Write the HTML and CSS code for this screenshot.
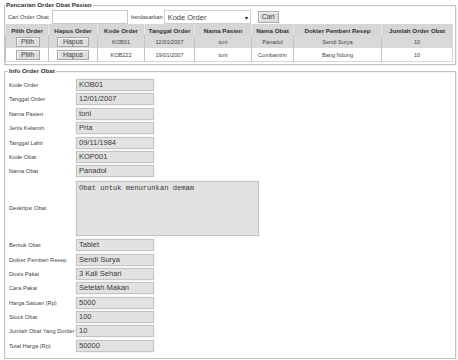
FILE: index.html
```html
<!DOCTYPE html>
<html>

<head>
    <title>Order Obat Pasien</title>
    <link rel="stylesheet" href="styles.css">
</head>

<body>
    <fieldset class="panel search-panel">
        <legend>Pencarian Order Obat Pasien</legend>
        <div class="search-row">
            <label class="lbl" for="cari">Cari Order Obat:</label>
            <input class="search-input" type="text" id="cari">
            <span class="lbl">berdasarkan</span>
            <div class="select">
                <span>Kode Order</span>
                <span class="arrow">&#9662;</span>
            </div>
            <button class="btn btn-cari" type="button">Cari</button>
        </div>
        <table class="orders">
            <colgroup>
                <col style="width: 43px">
                <col style="width: 49px">
                <col style="width: 47px">
                <col style="width: 50px">
                <col style="width: 57px">
                <col style="width: 42px">
                <col style="width: 88px">
                <col style="width: 71px">
            </colgroup>
            <tr>
                <th>Pilih Order</th>
                <th>Hapus Order</th>
                <th>Kode Order</th>
                <th>Tanggal Order</th>
                <th>Nama Pasien</th>
                <th>Nama Obat</th>
                <th>Dokter Pemberi Resep</th>
                <th>Jumlah Order Obat</th>
            </tr>
            <tr class="selected">
                <td><button class="btn btn-pilih" type="button">Pilih</button></td>
                <td><button class="btn btn-hapus" type="button">Hapus</button></td>
                <td>KOB01</td>
                <td>12/01/2007</td>
                <td>toni</td>
                <td>Panadol</td>
                <td>Sendi Surya</td>
                <td>10</td>
            </tr>
            <tr>
                <td><button class="btn btn-pilih" type="button">Pilih</button></td>
                <td><button class="btn btn-hapus" type="button">Hapus</button></td>
                <td>KOB222</td>
                <td>19/01/2007</td>
                <td>toni</td>
                <td>Combantrin</td>
                <td>Bang Ndung</td>
                <td>10</td>
            </tr>
        </table>
    </fieldset>

    <fieldset class="panel info-panel">
        <legend>Info Order Obat</legend>
        <div class="form-grid">
            <span class="lbl">Kode Order</span>
            <div class="field">KOB01</div>
            <span class="lbl">Tanggal Order</span>
            <div class="field">12/01/2007</div>
            <span class="lbl">Nama Pasien</span>
            <div class="field">toni</div>
            <span class="lbl">Jenis Kelamin</span>
            <div class="field">Pria</div>
            <span class="lbl">Tanggal Lahir</span>
            <div class="field">09/11/1984</div>
            <span class="lbl">Kode Obat</span>
            <div class="field">KOP001</div>
            <span class="lbl">Nama Obat</span>
            <div class="field">Panadol</div>
            <span class="lbl">Deskripsi Obat</span>
            <div class="field area">Obat untuk menurunkan demam</div>
            <span class="lbl">Bentuk Obat</span>
            <div class="field">Tablet</div>
            <span class="lbl">Dokter Pemberi Resep</span>
            <div class="field">Sendi Surya</div>
            <span class="lbl">Dosis Pakai</span>
            <div class="field">3 Kali Sehari</div>
            <span class="lbl">Cara Pakai</span>
            <div class="field">Setelah Makan</div>
            <span class="lbl">Harga Satuan (Rp)</span>
            <div class="field">5000</div>
            <span class="lbl">Stock Obat</span>
            <div class="field">100</div>
            <span class="lbl">Jumlah Obat Yang Dorder</span>
            <div class="field">10</div>
            <span class="lbl">Total Harga (Rp)</span>
            <div class="field">50000</div>
        </div>
    </fieldset>
</body>

</html>
```

FILE: styles.css
```css
body {
    font-family: "Liberation Sans", Arial, sans-serif;
    margin: 0;
    padding: 1px 2px 0 4px;
    background-color: #fff;
    color: #222;
}

.panel {
    margin: 0;
    border: 1px solid #c4c4c4;
    box-shadow: 1px 1px 0 #efefef, inset 1px 1px 0 #f4f4f4;
}

.panel legend {
    font-size: 6.2px;
    font-weight: bold;
    line-height: 8px;
    padding: 0 1px;
    color: #333;
}

.search-panel {
    padding: 0 1px 2px 0;
}

.info-panel {
    margin-top: 2px;
    padding: 0 3px 6px 3px;
}

.lbl {
    font-size: 5.7px;
    color: #444;
}

.search-row {
    display: flex;
    align-items: center;
    height: 14px;
    margin-top: 1px;
    padding-left: 3px;
}

.search-input {
    width: 76px;
    height: 14px;
    box-sizing: border-box;
    margin: 0 3px 0 2px;
    border: 1px solid #c8c8c8;
    background: #fff;
    padding: 0;
}

.select {
    display: flex;
    align-items: center;
    justify-content: space-between;
    width: 87px;
    height: 14px;
    box-sizing: border-box;
    margin-left: 1px;
    padding: 0 2px 0 3px;
    border: 1px solid #d0d0d0;
    font-size: 7.5px;
    color: #444;
}

.select .arrow {
    font-size: 6px;
    color: #222;
}

.btn {
    font-family: "Liberation Sans", Arial, sans-serif;
    background-color: #dedede;
    border: 1px solid #a8a8a8;
    box-shadow: inset 1px 1px 0 #f6f6f6;
    color: #444;
    padding: 0;
    cursor: pointer;
}

.btn-cari {
    width: 21px;
    height: 12px;
    margin-left: 7px;
    font-size: 7px;
    line-height: 10px;
}

.orders {
    width: 447px;
    table-layout: fixed;
    border-collapse: collapse;
    border: 1px solid #d6d6d6;
}

.orders th,
.orders td {
    padding: 0;
    text-align: center;
    border-left: 1px solid #c4c4c4;
    font-size: 5.6px;
    color: #444;
}

.orders th {
    height: 10px;
    font-size: 6.2px;
    font-weight: bold;
    background-color: #d6d6d6;
    border-left-color: #e8e8e8;
    color: #333;
}

.orders td {
    height: 13px;
}

.orders tr.selected td {
    background-color: #d9d9d9;
}

.btn-pilih {
    width: 24px;
    height: 10px;
    font-size: 7px;
    line-height: 8px;
    margin-left: 1px;
}

.btn-hapus {
    width: 32px;
    height: 10px;
    font-size: 7px;
    line-height: 8px;
}

.form-grid {
    display: grid;
    grid-template-columns: 67px auto;
    row-gap: 2.4px;
    align-items: center;
    justify-items: start;
    margin-top: 4px;
    padding-left: 1px;
}

.field {
    width: 78px;
    height: 12px;
    box-sizing: border-box;
    padding-left: 2px;
    border: 1px solid #c4c4c4;
    box-shadow: 0 0 0 1px #f5f5f5;
    background-color: #e2e2e2;
    font-size: 7.5px;
    line-height: 10px;
    color: #3a3a3a;
}

.field.area {
    width: 183px;
    height: 55px;
    margin: 1px 0;
    padding: 2px 0 0 2px;
    font-family: "Liberation Mono", "Courier New", monospace;
    font-size: 7.1px;
    line-height: 8px;
}
```
